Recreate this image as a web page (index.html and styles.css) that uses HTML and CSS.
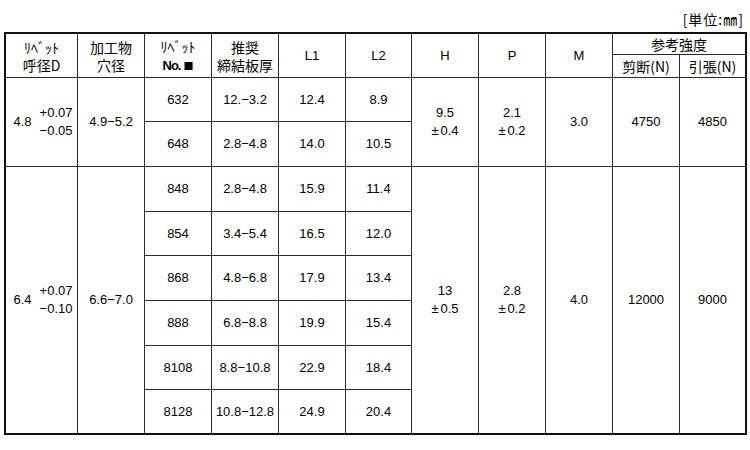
FILE: index.html
```html
<!DOCTYPE html>
<html lang="ja">
<head>
<meta charset="utf-8">
<title>リベット寸法表</title>
<link rel="stylesheet" href="styles.css">
</head>
<body>
<div class="wrap">
  <div class="unit"><span class="jp">[単位:㎜]</span></div>
  <div class="grid">
    <div class="c r2 jp"><span>ﾘﾍﾞｯﾄ<br>呼径D</span></div>
    <div class="c r2 jp"><span>加工物<br>穴径</span></div>
    <div class="c r2 jp"><span>ﾘﾍﾞｯﾄ<br><span class="no">No.</span><span class="sq">■</span></span></div>
    <div class="c r2 jp"><span>推奨<br>締結板厚</span></div>
    <div class="c r2">L1</div>
    <div class="c r2">L2</div>
    <div class="c r2">H</div>
    <div class="c r2">P</div>
    <div class="c r2">M</div>
    <div class="c cs2 jp">参考強度</div>
    <div class="c jp">剪断(N)</div>
    <div class="c jp">引張(N)</div>

    <div class="c r2"><div class="tol"><span>4.8</span><span class="pm">+0.07<br>−0.05</span></div></div>
    <div class="c r2">4.9−5.2</div>
    <div class="c">632</div><div class="c">12.−3.2</div><div class="c">12.4</div><div class="c">8.9</div>
    <div class="c r2"><span>9.5<br><span class="pmsign">±</span>0.4</span></div>
    <div class="c r2"><span>2.1<br><span class="pmsign">±</span>0.2</span></div>
    <div class="c r2">3.0</div>
    <div class="c r2">4750</div>
    <div class="c r2">4850</div>
    <div class="c">648</div><div class="c">2.8−4.8</div><div class="c">14.0</div><div class="c">10.5</div>

    <div class="c r6"><div class="tol"><span>6.4</span><span class="pm">+0.07<br>−0.10</span></div></div>
    <div class="c r6">6.6−7.0</div>
    <div class="c">848</div><div class="c">2.8−4.8</div><div class="c">15.9</div><div class="c">11.4</div>
    <div class="c r6"><span>13<br><span class="pmsign">±</span>0.5</span></div>
    <div class="c r6"><span>2.8<br><span class="pmsign">±</span>0.2</span></div>
    <div class="c r6">4.0</div>
    <div class="c r6">12000</div>
    <div class="c r6">9000</div>
    <div class="c">854</div><div class="c">3.4−5.4</div><div class="c">16.5</div><div class="c">12.0</div>
    <div class="c">868</div><div class="c">4.8−6.8</div><div class="c">17.9</div><div class="c">13.4</div>
    <div class="c">888</div><div class="c">6.8−8.8</div><div class="c">19.9</div><div class="c">15.4</div>
    <div class="c">8108</div><div class="c">8.8−10.8</div><div class="c">22.9</div><div class="c">18.4</div>
    <div class="c">8128</div><div class="c">10.8−12.8</div><div class="c">24.9</div><div class="c">20.4</div>
  </div>
</div>
</body>
</html>
```
FILE: styles.css
```css
html, body {
  margin: 0;
  padding: 0;
  background: #fff;
}
body {
  font-family: "Liberation Sans", "Noto Sans CJK JP", sans-serif;
  font-size: 13px;
  color: #000;
}
.wrap {
  width: 743px;
  margin-left: 4px;
}
.unit {
  text-align: right;
  padding-top: 11px;
  padding-right: 3px;
  line-height: 16px;
  margin-bottom: 3px;
}
.unit .jp {
  letter-spacing: 1px;
}
.jp {
  font-family: "Noto Sans CJK JP", sans-serif;
  font-size: 14px;
}
.grid {
  display: grid;
  grid-template-columns: 71px repeat(4, 66px) 65px repeat(4, 66px) 65px;
  grid-template-rows: 20px 22px 43px 44px 44px 43px 44px 44px 43px 43px;
  gap: 1px;
  background: #2a2a2a;
  border: 2px solid #111;
  width: 743px;
  box-sizing: border-box;
}
.c {
  background: #fff;
  display: flex;
  align-items: center;
  justify-content: center;
  text-align: center;
  line-height: 18px;
}
.r2 { grid-row: span 2; }
.r6 { grid-row: span 6; }
.cs2 { grid-column: span 2; }
.tol {
  display: flex;
  align-items: center;
  gap: 8px;
  margin-left: 3px;
}
.pm {
  text-align: right;
}
.pmsign {
  display: inline-block;
  width: 9px;
  text-align: left;
}
.no {
  font-family: "Liberation Sans", sans-serif;
  font-size: 13px;
  font-weight: bold;
  letter-spacing: -1px;
  margin-right: 3px;
}
.sq {
  font-size: 10px;
}
```
